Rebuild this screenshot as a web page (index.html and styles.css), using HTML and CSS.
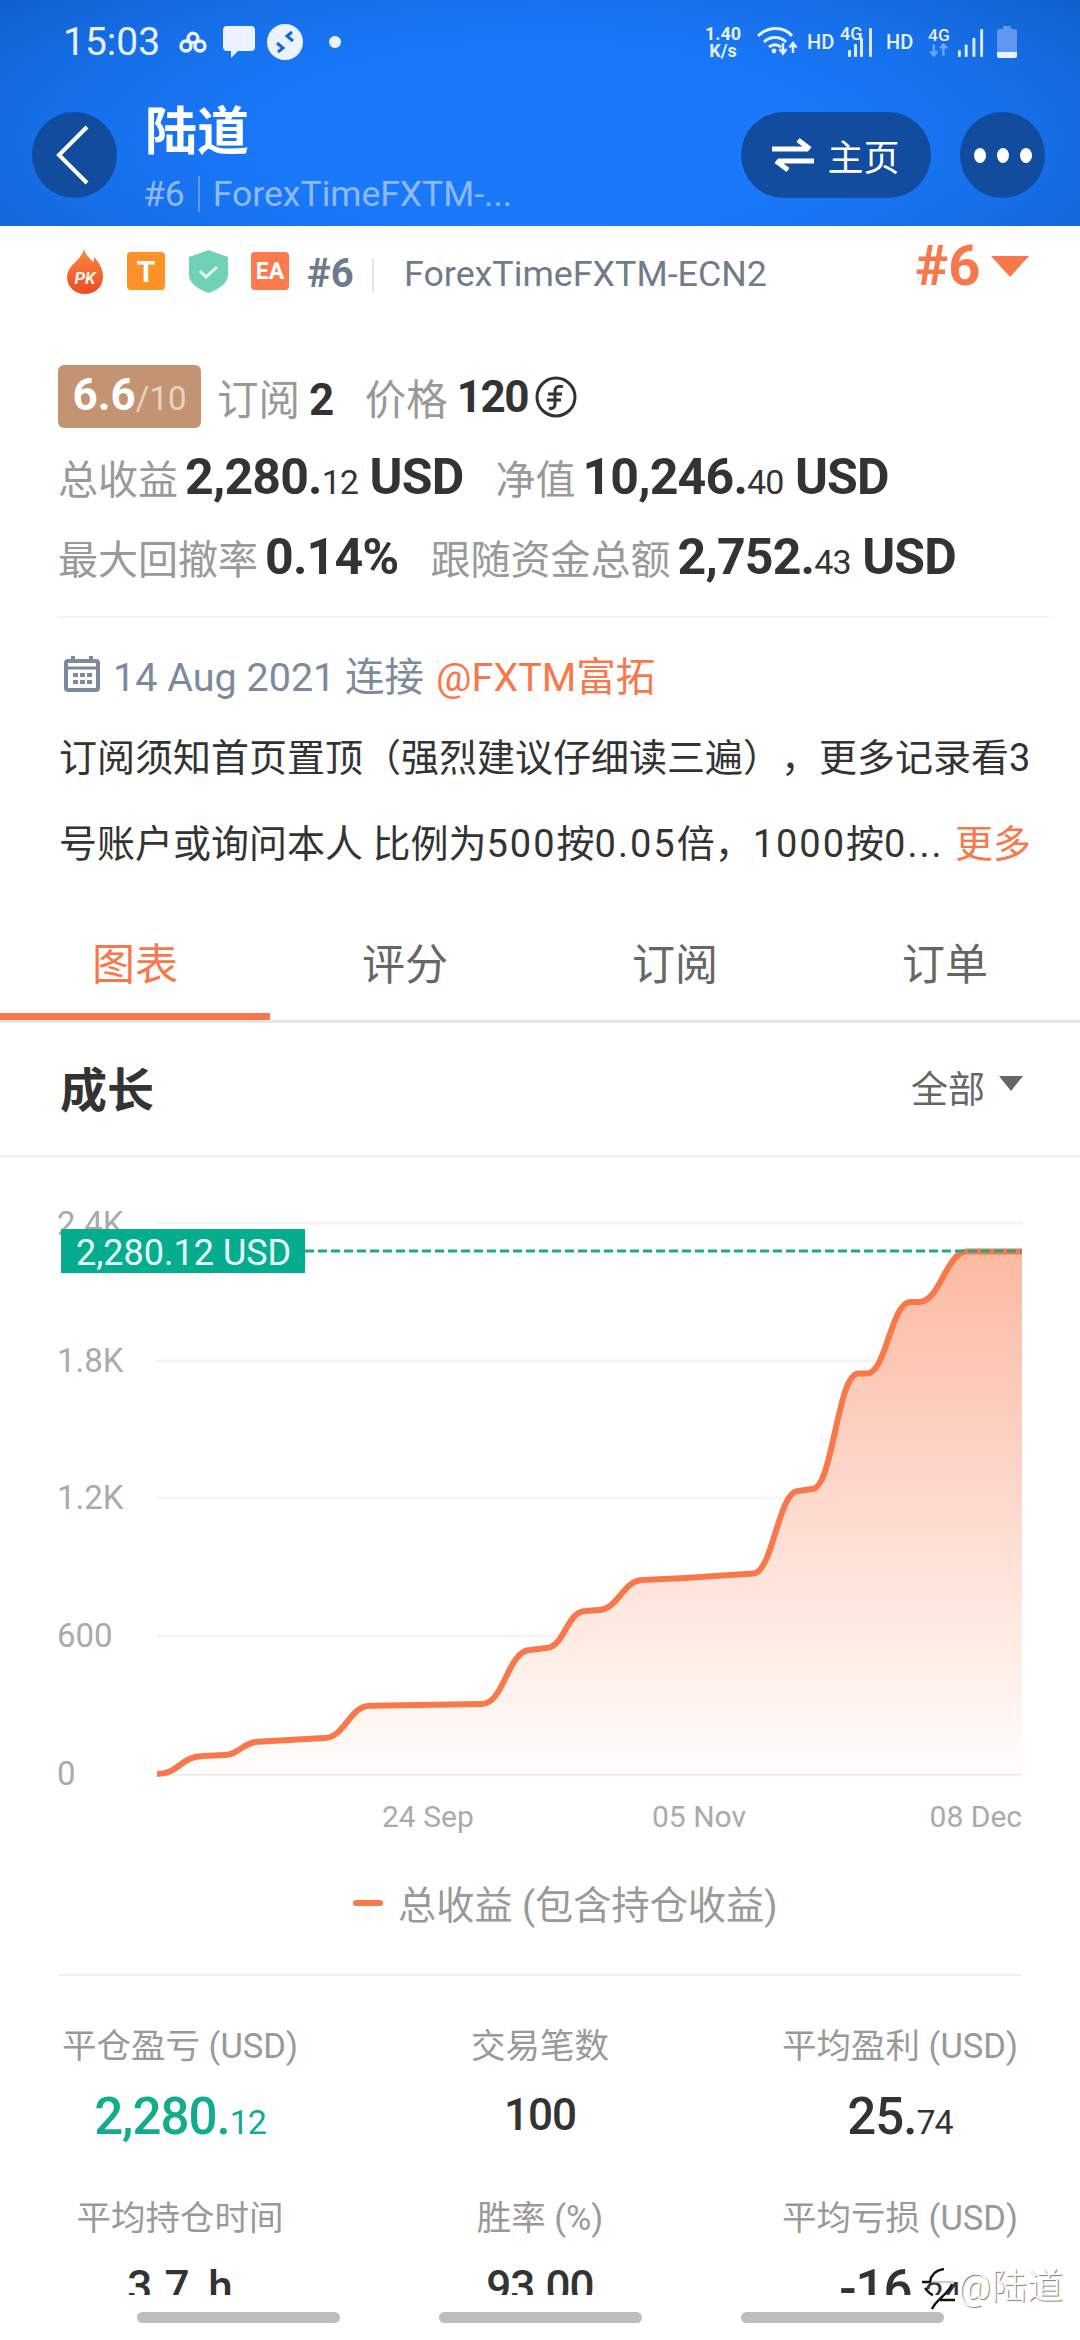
FILE: index.html
```html
<!DOCTYPE html>
<html lang="zh">
<head>
<meta charset="utf-8">
<title>陆道</title>
<link rel="stylesheet" href="styles.css">
</head>
<body>
<div class="page">
  <header class="hero">
    <div class="status">
      <div class="status-left">
        <span class="time">15:03</span>
        <svg class="si-cloud" viewBox="0 0 30 22"><g fill="none" stroke="#eaf3ff" stroke-width="3.4"><circle cx="15" cy="7" r="4.8"/><circle cx="8" cy="15" r="5"/><circle cx="22" cy="15" r="5"/></g></svg>
        <svg class="si-msg" viewBox="0 0 32 32"><path d="M4 0h24a4 4 0 0 1 4 4v17a4 4 0 0 1-4 4H15l-7 7v-7H4a4 4 0 0 1-4-4V4a4 4 0 0 1 4-4z" fill="#eaf3ff"/></svg>
        <svg class="si-remote" viewBox="0 0 36 36"><circle cx="18" cy="18" r="18" fill="#eaf3ff"/><path d="M10 19l6 5-5 4M26 17l-6-5 5-4" fill="none" stroke="#1668d8" stroke-width="3"/></svg>
        <span class="si-dot"></span>
      </div>
      <div class="status-right">
        <span class="speed">1.40<br>K/s</span>
        <svg class="si-wifi" viewBox="0 0 42 32"><g fill="none" stroke="#e6f0ff" stroke-width="3"><path d="M1 10C11 0 27 0 35 10"/><path d="M7 16c6-6 16-6 22 0"/><path d="M12 21c4-3 8-3 12 0"/></g><circle cx="17" cy="25" r="2.4" fill="#e6f0ff"/><path d="M26 17v10M22.500 23l3.500 4.500 3.500-4.500M36 27V17M32.500 21.500L36 17l3.500 4.500" fill="none" stroke="#e6f0ff" stroke-width="2.400"/></svg>
        <span class="hd">HD</span>
        <svg class="si-sig" viewBox="0 -4 36 40"><text class="sig-text" x="0" y="14">4G</text><g fill="#dbe9ff"><rect x="8" y="24" width="3" height="7" rx="1"/><rect x="14" y="18" width="3" height="13" rx="1"/><rect x="20" y="12" width="3" height="19" rx="1"/><rect x="29" y="2" width="3" height="29" rx="1"/></g></svg>
        <span class="hd hd-b">HD</span>
        <svg class="si-sig2" viewBox="0 -4 60 40"><text class="sig-text" x="0" y="14">4G</text><path d="M6 18v11M2.500 25L6 29.500 9.500 25M16 29.500V18M12.500 22L16 18l3.500 4" fill="none" stroke="#6fa6f3" stroke-width="2.400"/><g fill="#dbe9ff"><rect x="31" y="24" width="3" height="7" rx="1"/><rect x="38" y="18" width="3" height="13" rx="1"/><rect x="46" y="11" width="3" height="20" rx="1"/><rect x="54" y="2" width="3" height="29" rx="1"/></g></svg>
        <svg class="si-batt" viewBox="0 0 20 32"><path d="M6 0h8v3h4a2 2 0 0 1 2 2v21H0V5a2 2 0 0 1 2-2h4z" fill="#5f97ee"/><path d="M0 26h20v4a2 2 0 0 1-2 2H2a2 2 0 0 1-2-2z" fill="#eaf3ff"/></svg>
      </div>
    </div>
    <div class="nav">
      <button class="round-btn" aria-label="back"><svg class="back-ico" viewBox="0 0 36 62"><path d="M32 3L4 31l28 28" fill="none" stroke="#fff" stroke-width="4"/></svg></button>
      <div class="nav-title">
        <div class="title">陆道</div>
        <div class="subtitle"><span>#6</span><i class="sub-sep"></i><span>ForexTimeFXTM-...</span></div>
      </div>
      <button class="home-btn"><svg class="swap-ico" viewBox="0 0 42 34"><path d="M0 11h36M26 2l12 9M42 23H6M16 32L4 23" fill="none" stroke="#fff" stroke-width="5"/></svg><span>主页</span></button>
      <button class="round-btn more-btn" aria-label="more"><i></i><i></i><i></i></button>
    </div>
  </header>

  <section class="badges">
    <svg class="b-pk" viewBox="0 0 36 45"><defs><linearGradient id="fl" x1="0" y1="0" x2="0" y2="1"><stop offset="0" stop-color="#fb8a3c"/><stop offset="1" stop-color="#ee4a25"/></linearGradient></defs><path d="M17 0c2 7 6 9 9 13 1-2 1-3 1-5 6 6 9 13 9 20 0 10-8 17-18 17S0 38 0 28C0 16 14 12 17 0z" fill="url(#fl)"/><text class="pk-text" x="18" y="35" text-anchor="middle">PK</text></svg>
    <span class="b-sq b-t">T</span>
    <svg class="b-shield" viewBox="0 0 39 43"><path d="M19.500 0L39 7v18c0 8-9 14-19.500 18C9 39 0 33 0 25V7z" fill="#70d1b9"/><path d="M11 21l6 6 11-10" fill="none" stroke="#eafaf5" stroke-width="3"/></svg>
    <span class="b-sq b-ea">EA</span>
    <span class="rank">#6</span>
    <i class="b-sep"></i>
    <span class="server">ForexTimeFXTM-ECN2</span>
    <span class="rank-pick">#6<i class="tri tri-o"></i></span>
  </section>

  <section class="metrics">
    <div class="m-row">
      <span class="rating">6.6<small>/10</small></span>
      <span class="m m-top"><em>订阅</em><b>2</b></span>
      <span class="m m-top m-gap"><em>价格</em><b>120</b><svg class="coin" viewBox="0 0 42 42"><circle cx="21" cy="21" r="19" fill="none" stroke="#333" stroke-width="3"/><path d="M28 11c-4-2-8 0-8 4v13c0 4-3 5-6 4M13 18h14M12 24h14" fill="none" stroke="#333" stroke-width="3"/></svg></span>
    </div>
    <div class="m-row">
      <span class="m"><em>总收益</em><b>2,280.<small>12</small> USD</b></span>
      <span class="m m-gap2"><em>净值</em><b>10,246.<small>40</small> USD</b></span>
    </div>
    <div class="m-row">
      <span class="m"><em>最大回撤率</em><b>0.14%</b></span>
      <span class="m m-gap2"><em>跟随资金总额</em><b>2,752.<small>43</small> USD</b></span>
    </div>
  </section>

  <div class="rule"></div>

  <section class="info">
    <div class="date-row">
      <svg class="cal" viewBox="0 0 36 36"><path d="M9 0v5M27 0v5" stroke="#7b8a9c" stroke-width="4"/><rect x="2" y="5" width="32" height="29" rx="2" fill="none" stroke="#7b8a9c" stroke-width="4"/><path d="M2 12h32" stroke="#7b8a9c" stroke-width="3"/><g fill="#7b8a9c"><rect x="9" y="17" width="5" height="4"/><rect x="16" y="17" width="5" height="4"/><rect x="23" y="17" width="5" height="4"/><rect x="9" y="24" width="5" height="4"/><rect x="16" y="24" width="5" height="4"/><rect x="23" y="24" width="5" height="4"/></g></svg>
      <span class="date">14 Aug 2021 连接</span>
      <span class="link">@FXTM富拓</span>
    </div>
    <p class="desc">订阅须知首页置顶（强烈建议仔细读三遍），更多记录看3</p>
    <p class="desc desc-last"><span>号账户或询问本人 比例为<span class="dg">500</span>按<span class="dg">0.05</span>倍，<span class="dg">1000</span>按<span class="dg">0...</span></span><span class="link">更多</span></p>
  </section>

  <nav class="tabs">
    <span class="tab active">图表</span>
    <span class="tab">评分</span>
    <span class="tab">订阅</span>
    <span class="tab">订单</span>
  </nav>

  <div class="growth">
    <span class="growth-title">成长</span>
    <span class="range">全部<i class="tri tri-g"></i></span>
  </div>

  <svg class="chart" viewBox="0 1158 1080 816">
    <defs>
      <linearGradient id="area" x1="0" y1="1251" x2="0" y2="1774" gradientUnits="userSpaceOnUse">
        <stop offset="0" stop-color="#fcb9a1"/>
        <stop offset="1" stop-color="#fffdfc"/>
      </linearGradient>
    </defs>
    <g class="grid">
      <path d="M157 1223H1022"/><path d="M157 1361H1022"/><path d="M157 1498H1022"/><path d="M157 1636H1022"/>
    </g>
    <path class="axis" d="M157 1774H1022"/>
    <g class="ylab">
      <text x="57" y="1235">2.4K</text><text x="57" y="1372">1.8K</text><text x="57" y="1509">1.2K</text><text x="57" y="1647">600</text><text x="57" y="1785">0</text>
    </g>
    <path fill="url(#area)" d="M157 1774C178 1774 182 1756 203 1756L224 1755C239 1755 243 1742 258 1741.700L324 1738C345 1738 349 1706 370 1705.700L482 1704C504 1704 508 1650 530 1650L546 1648C564 1648 567 1611 585.500 1611L598 1610C618 1610 623 1580 643 1580L685 1578L753 1573.500C773 1573 778 1492 798 1491L812 1489C833 1489 837 1375 858 1373.600L867 1373.600C886 1373.600 891 1303 910 1302L919 1302C940 1302 946 1252 967 1251.500L1022 1251.500V1774Z"/>
    <path class="line" d="M157 1774C178 1774 182 1756 203 1756L224 1755C239 1755 243 1742 258 1741.700L324 1738C345 1738 349 1706 370 1705.700L482 1704C504 1704 508 1650 530 1650L546 1648C564 1648 567 1611 585.500 1611L598 1610C618 1610 623 1580 643 1580L685 1578L753 1573.500C773 1573 778 1492 798 1491L812 1489C833 1489 837 1375 858 1373.600L867 1373.600C886 1373.600 891 1303 910 1302L919 1302C940 1302 946 1252 967 1251.500L1022 1251.500"/>
    <path class="dash" d="M305 1251H1022"/>
    <rect class="tag" x="61" y="1229" width="244" height="44"/>
    <text class="tag-text" x="76" y="1265">2,280.12 USD</text>
    <g class="xlab">
      <text x="382" y="1827">24 Sep</text><text x="652" y="1827">05 Nov</text><text x="1022" y="1827" text-anchor="end">08 Dec</text>
    </g>
    <path class="legend-line" d="M356 1903H380"/>
    <text class="legend-text" x="398" y="1919">总收益 (包含持仓收益)</text>
  </svg>

  <section class="stats">
    <div class="stat"><span class="s-label">平仓盈亏 (USD)</span><span class="s-val s-green">2,280.<small>12</small></span></div>
    <div class="stat"><span class="s-label">交易笔数</span><span class="s-val s-plain">100</span></div>
    <div class="stat"><span class="s-label">平均盈利 (USD)</span><span class="s-val">25.<small>74</small></span></div>
    <div class="stat"><span class="s-label">平均持仓时间</span><span class="s-val s-plain s-hours">3.7 h</span></div>
    <div class="stat"><span class="s-label">胜率 (%)</span><span class="s-val s-plain">93.00</span></div>
    <div class="stat"><span class="s-label">平均亏损 (USD)</span><span class="s-val">-16.<small>24</small></span></div>
  </section>

  <footer class="pills"><i></i><i></i><i></i></footer>

  <div class="mark">
    <svg class="mark-ico" viewBox="0 0 34 42"><path d="M2 14H32" fill="none" stroke="#bbb" stroke-width="1.500"/><path d="M0 14H9M8 14C9 7 14 2 22 1M30 16C26 27 15 30 10 41M18 32H33M3 20C6 24 8 26 11 27" fill="none" stroke="#111" stroke-width="2.400"/></svg>
    <span>@陆道</span>
  </div>
</div>
</body>
</html>
```
FILE: styles.css
```css
* { box-sizing: border-box; }
html, body { margin: 0; padding: 0; background: #fff; }
body { font-family: Roboto, "Noto Sans CJK SC", sans-serif; color: #333; text-spacing-trim: space-all; }
i, em { font-style: normal; }
button { border: 0; padding: 0; font: inherit; color: inherit; }
.page { position: relative; width: 1080px; height: 2340px; overflow: hidden; background: #fff; }

.hero { height: 226px; background: radial-gradient(ellipse 720px 240px at 50% 62%, #1a79fb 35%, #156ee6 70%, #0f5ec8 100%); color: #fff; }
.status { height: 80px; padding: 4px 63px 0 63px; display: flex; justify-content: space-between; align-items: center; }
.status-left, .status-right { display: flex; align-items: center; }
.time { font-size: 39px; color: #e8f1ff; width: 115px; }
.si-cloud { width: 30px; height: 22px; margin-right: 15px; }
.si-msg { width: 32px; height: 32px; margin-right: 12px; }
.si-remote { width: 36px; height: 36px; margin-right: 26px; }
.si-dot { width: 12px; height: 12px; border-radius: 50%; background: #eaf3ff; }
.speed { font-size: 18px; font-weight: 700; line-height: 17px; color: #e6f0ff; text-align: center; width: 40px; margin-right: 14px; }
.si-wifi { width: 42px; height: 32px; margin-right: 8px; }
.hd { font-size: 20px; font-weight: 500; color: #e6f0ff; width: 26px; margin-right: 7px; }
.hd-b { margin-left: 10px; margin-right: 16px; }
.si-sig { width: 36px; height: 40px; }
.si-sig2 { width: 58px; height: 39px; margin-right: 11px; }
.si-batt { width: 20px; height: 32px; }
.sig-text { font-size: 18px; font-weight: 500; fill: #e6f0ff; }

.nav { height: 146px; display: flex; align-items: flex-start; padding: 32px 35px 0 32px; }
.round-btn { width: 85px; height: 86px; border-radius: 50%; background: #124c9f; display: flex; align-items: center; justify-content: center; flex: none; }
.back-ico { width: 36px; height: 62px; margin-right: 4px; }
.nav-title { flex: 1; margin-left: 28px; margin-top: -9px; }
.title { font-size: 52px; font-weight: 700; line-height: 60px; }
.subtitle { display: flex; align-items: center; font-size: 35.500px; line-height: 44px; color: #8fbaf6; margin: 9px 0 0 -2px; }
.sub-sep { width: 2px; height: 36px; margin: 0 13px; background: #5e9af0; }
.home-btn { width: 190px; height: 86px; border-radius: 43px; background: #124c9f; display: flex; align-items: center; justify-content: center; color: #fff; font-size: 36px; margin-right: 29px; }
.swap-ico { width: 42px; height: 34px; margin-right: 13px; }
.more-btn { gap: 11px; }
.more-btn i { width: 12px; height: 15px; border-radius: 50%; background: #fff; }

.badges { height: 90px; display: flex; align-items: center; padding-left: 67px; position: relative; }
.b-pk { width: 36px; height: 45px; margin-right: 24px; }
.pk-text { font-size: 17px; font-weight: 700; font-style: italic; fill: #fff3ea; }
.b-sq { width: 38px; height: 38px; border-radius: 4px; color: #fff; display: flex; align-items: center; justify-content: center; font-weight: 700; }
.b-t { background: #fc9128; font-size: 30px; margin-right: 24px; }
.b-shield { width: 39px; height: 43px; margin-right: 23px; }
.b-ea { background: #fb7a4e; font-size: 23px; margin-right: 18px; }
.rank { font-size: 40px; font-weight: 700; color: #6f7b8b; width: 48px; margin-top: 4px; }
.b-sep { width: 2px; height: 34px; background: #e4e4e4; margin: 8px 30px 0 17px; }
.server { font-size: 35.800px; color: #6f7b8b; margin-top: 6px; white-space: nowrap; }
.rank-pick { position: absolute; left: 915px; top: 12px; display: flex; align-items: center; font-size: 56px; font-weight: 700; color: #f9784b; line-height: 56px; }
.tri { display: block; width: 0; height: 0; border-style: solid; border-color: transparent; border-bottom-width: 0; }
.tri-o { border-width: 21px 19px 0; border-top-color: #f9784b; margin-left: 11px; }

.metrics { padding: 41px 0 0 58px; }
.m-row { height: 80px; display: flex; align-items: center; }
.rating { width: 143px; height: 63px; margin-top: -1px; border-radius: 6px; background: #c49372; color: #fff; font-size: 44px; line-height: 60px; font-weight: 700; display: flex; align-items: baseline; justify-content: center; }
.rating small { font-size: 33px; font-weight: 400; color: #e8d3c3; }
.m { display: flex; align-items: baseline; }
.m em { font-size: 40px; color: #999; margin-right: 7px; }
.m b { font-size: 50px; font-weight: 700; letter-spacing: -0.800px; color: #333; white-space: pre; }
.m b small { font-size: 34px; font-weight: 400; letter-spacing: -1px; }
.m-top em { font-size: 41.500px; margin-right: 9px; }
.m-top b { font-size: 44px; letter-spacing: -1.500px; }
.rating + .m { margin-left: 16px; }
.m-gap { margin-left: 32px; align-items: center; }
.m-gap2 { margin-left: 32px; }
.coin { width: 42px; height: 42px; margin-left: 7px; }

.rule { height: 2px; margin: 19px 30px 0 58px; background: #f3f3f3; }

.info { padding: 29px 49px 0 59px; }
.date-row { height: 60px; padding-bottom: 7px; display: flex; align-items: center; margin-bottom: 8px; }
.cal { width: 36px; height: 36px; margin: 0 13px 0 5px; }
.date { font-size: 39.500px; color: #7b8a9c; margin-right: 12px; }
.link { font-size: 39.500px; color: #f9784b; }
.desc { margin: 0; height: 86px; line-height: 86px; font-size: 38px; color: #333; white-space: nowrap; }
.desc .link { font-size: 38px; }
.desc-last { display: flex; justify-content: space-between; }
.dg { letter-spacing: 2px; }

.tabs { display: flex; padding-top: 48px; border-bottom: 3px solid #e6e6e6; }
.tab { flex: 1; height: 85px; line-height: 60px; text-align: center; font-size: 43px; color: #666; }
.tab.active { color: #f9784b; border-bottom: 7px solid #f9784b; }

.growth { height: 135px; padding: 0 57px 5px 60px; display: flex; align-items: center; justify-content: space-between; border-bottom: 3px solid #f2f2f2; }
.growth-title { font-size: 47px; font-weight: 700; }
.range { display: flex; align-items: center; font-size: 37px; color: #666; }
.tri-g { border-width: 15px 12px 0; border-top-color: #666; margin-left: 14px; margin-bottom: 6px; }

.chart { display: block; width: 1080px; height: 816px; }
.grid path { stroke: #f5f5f5; stroke-width: 3; fill: none; }
.axis { stroke: #e8e8e8; stroke-width: 3; fill: none; }
.ylab text, .xlab text { fill: #aaa; }
.ylab text { font-size: 33px; }
.xlab text { font-size: 30px; }
.line { fill: none; stroke: #f9784b; stroke-width: 6; }
.dash { fill: none; stroke: #1fa88f; stroke-width: 3; stroke-dasharray: 9 4; }
.tag { fill: #06ac8e; }
.tag-text { font-size: 36px; fill: #e8fffa; }
.legend-line { stroke: #f9784b; stroke-width: 6; stroke-linecap: round; }
.legend-text { font-size: 38.200px; fill: #999; }

.stats { height: 321px; overflow: hidden; margin: 0; position: relative; display: grid; grid-template-columns: repeat(3, 360px); grid-auto-rows: 172px; padding-top: 44px; align-content: start; }
.stats::before { content: ""; position: absolute; left: 58px; right: 58px; top: 0; height: 2px; background: #f0f0f0; }
.stat { display: flex; flex-direction: column; align-items: center; }
.s-label { font-size: 34.500px; line-height: 50px; color: #999; white-space: nowrap; margin-top: 3px; }
.s-val { font-size: 51px; font-weight: 500; line-height: 60px; margin-top: 16px; letter-spacing: -1px; color: #333; }
.s-val small { font-size: 34px; font-weight: 400; }
.s-plain { font-size: 44px; margin-top: 14px; }
.s-hours { word-spacing: 8px; letter-spacing: 0; }
.s-green { color: #12ab8e; }

.pills { height: 45px; padding-top: 17px; display: flex; justify-content: center; gap: 99px; }
.pills i { width: 203px; height: 11px; border-radius: 6px; background: #bdbdbd; }

.mark { position: absolute; left: 922px; top: 2256px; display: flex; align-items: center; gap: 2px; color: #fff; font-size: 36px; font-weight: 300; text-shadow: 1px 1px 1px #777; }
.mark-ico { width: 34px; height: 42px; margin-top: 12px; }
```
